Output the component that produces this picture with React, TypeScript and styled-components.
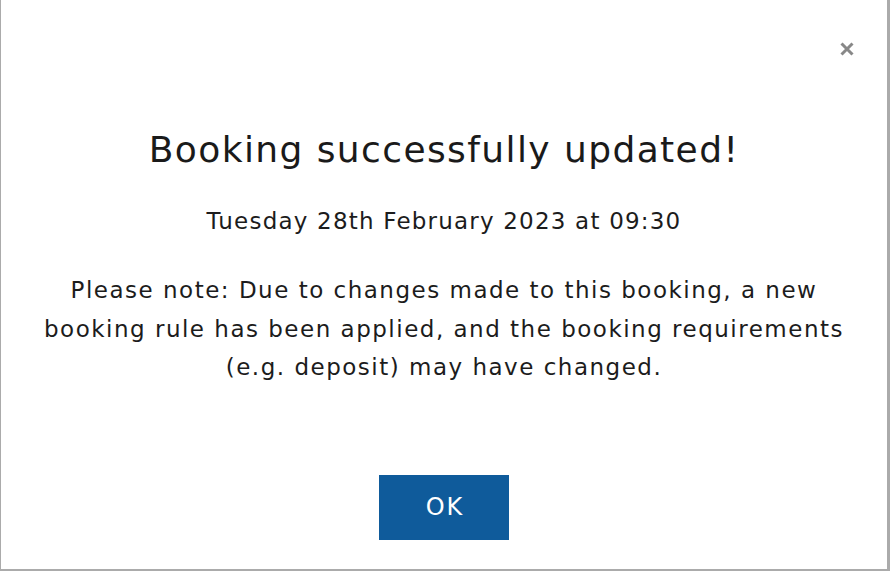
import styled, { createGlobalStyle } from 'styled-components';

const GlobalStyle = createGlobalStyle`
    html, body {
        margin: 0;
        padding: 0;
        background: #ffffff;
    }
    body {
        font-family: "DejaVu Sans", "Liberation Sans", sans-serif;
        color: #1c1c1c;
    }
`;

const Dialog = styled.div`
    position: relative;
    box-sizing: border-box;
    width: 890px;
    height: 571px;
    background: #ffffff;
    border-left: 1px solid #ababab;
    border-right: 3px solid #ababab;
    border-bottom: 2px solid #ababab;
    display: flex;
    flex-direction: column;
    align-items: center;
    padding-top: 128px;
`;

const CloseButton = styled.button`
    position: absolute;
    top: 38px;
    right: 29px;
    width: 22px;
    height: 22px;
    padding: 0;
    border: none;
    background: transparent;
    display: flex;
    align-items: center;
    justify-content: center;
    cursor: pointer;
`;

const Title = styled.h1`
    margin: 0;
    font-size: 36px;
    line-height: 44px;
    font-weight: 400;
    letter-spacing: 1.4px;
    color: #1a1a1a;
    text-align: center;
`;

const DateLine = styled.p`
    margin: 34px 0 0;
    font-size: 23px;
    line-height: 30px;
    letter-spacing: 1.2px;
    text-align: center;
`;

const Note = styled.p`
    margin: 35px 0 0;
    font-size: 23px;
    line-height: 38.5px;
    letter-spacing: 1.5px;
    text-align: center;
    white-space: nowrap;
`;

const OkButton = styled.button`
    margin-top: 88px;
    width: 130px;
    height: 65px;
    padding: 0 0 0 2px;
    border: none;
    background: #0f5b9b;
    color: #ffffff;
    font-family: inherit;
    font-size: 24px;
    letter-spacing: 2px;
    cursor: pointer;
`;

function App() {
    return <>
        <GlobalStyle />
        <Dialog>
            <CloseButton aria-label='Close'>
                <svg width="14" height="14" viewBox="0 0 14 14">
                    <path d="M1.5 1.5 L12.5 12.5 M12.5 1.5 L1.5 12.5" stroke="#888888" strokeWidth="3" strokeLinecap="butt" />
                </svg>
            </CloseButton>

            <Title>Booking successfully updated!</Title>
            <DateLine>Tuesday 28th February 2023 at 09:30</DateLine>
            <Note>
                Please note: Due to changes made to this booking, a new<br />
                booking rule has been applied, and the booking requirements<br />
                (e.g. deposit) may have changed.
            </Note>

            <OkButton>OK</OkButton>
        </Dialog>
    </>
}

export default App
